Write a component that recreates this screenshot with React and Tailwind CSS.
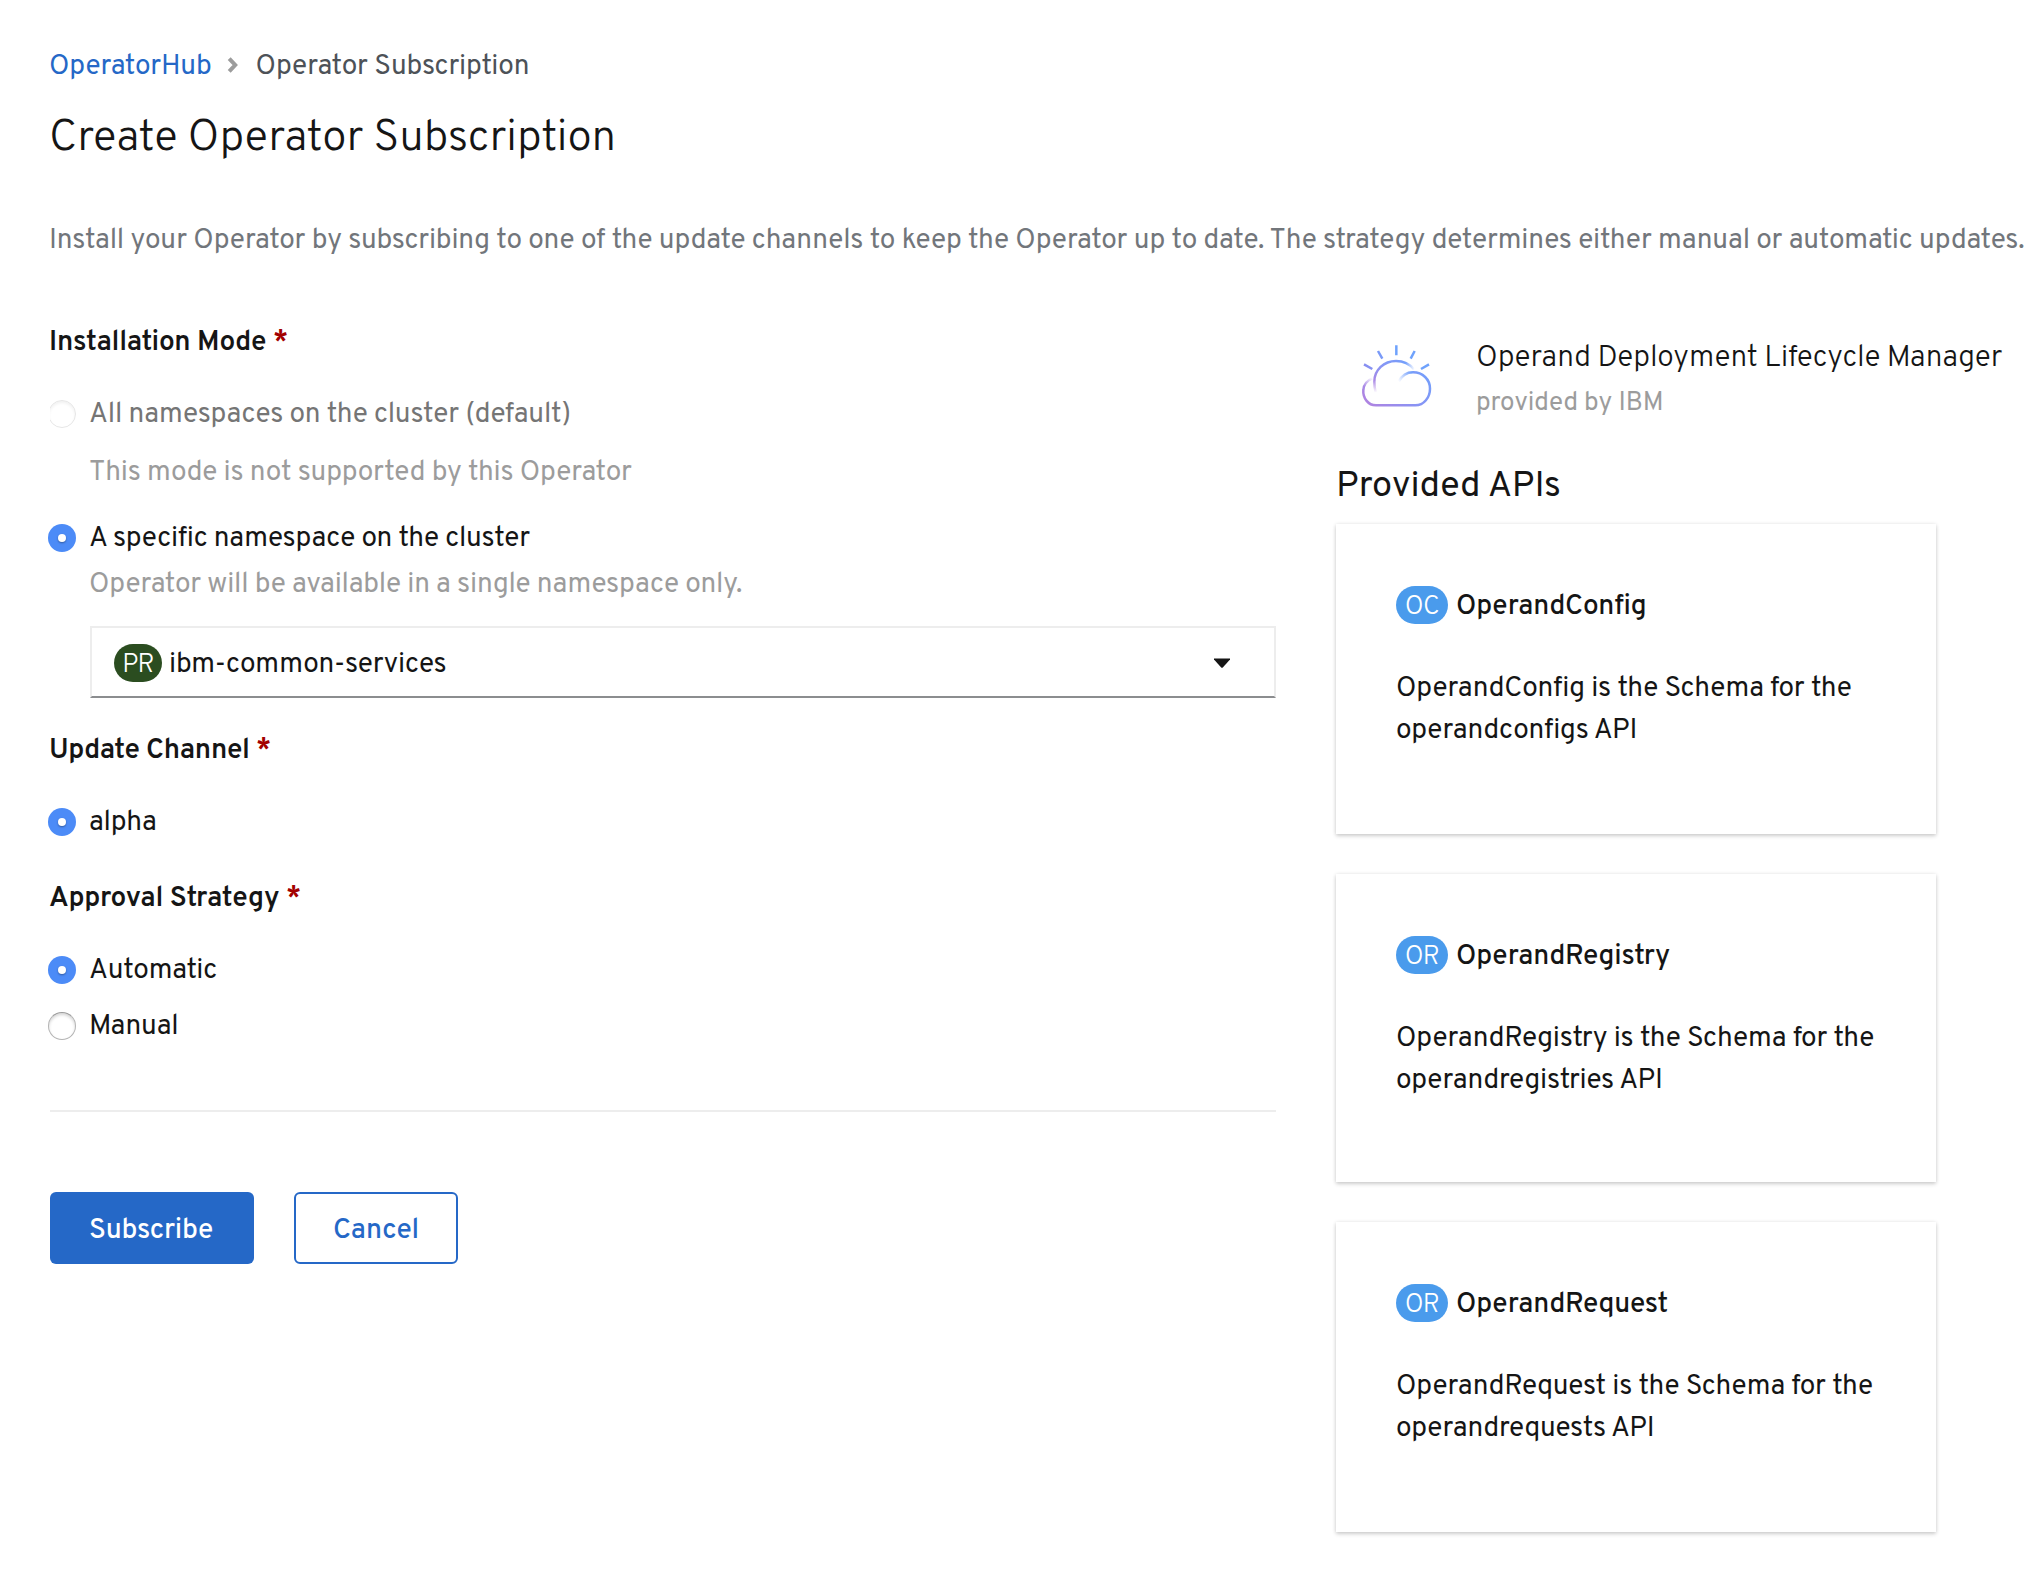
import React from "react";

function Heading({ children, className }) {
  return (
    <h2 className={`-ml-px text-[28px] leading-[42px] font-semibold text-[#151515] ${className}`}>
      {children} <span className="text-[#a30000]">*</span>
    </h2>
  );
}

function Radio({ checked, disabled }) {
  if (checked) {
    return (
      <span className="-ml-0.5 flex size-7 shrink-0 items-center justify-center rounded-full bg-[#4c8bf7]">
        <span className="size-2 rounded-full bg-white shadow-[0_1px_2px_rgba(0,0,0,0.35)]" />
      </span>
    );
  }
  if (disabled) {
    return (
      <span className="flex h-7 w-[26px] shrink-0 justify-end overflow-hidden">
        <span className="size-7 shrink-0 rounded-full border border-[#e6e6e6] shadow-[inset_0_2px_3px_rgba(0,0,0,0.06)]" />
      </span>
    );
  }
  return (
    <span className="-ml-0.5 size-7 shrink-0 rounded-full border border-[#b4b4b4] border-t-[#9a9a9a] bg-white shadow-[inset_0_2px_3px_rgba(0,0,0,0.16)]" />
  );
}

function Option({ label, checked, disabled, className }) {
  return (
    <label className={`flex h-[42px] items-center gap-[13px] ${className}`}>
      <span className="flex pb-0.5">
        <Radio checked={checked} disabled={disabled} />
      </span>
      <span className={disabled ? "text-[#757575]" : "text-[#151515]"}>{label}</span>
    </label>
  );
}

function CloudIcon() {
  return (
    <svg viewBox="0 0 360 270" className="mt-2 ml-1 h-[90px] w-[120px] shrink-0" fill="none" strokeWidth="7.5">
      <defs>
        <linearGradient id="cloud-base" gradientUnits="userSpaceOnUse" x1="80" y1="228" x2="240" y2="100">
          <stop offset="0" stopColor="#b183e0" />
          <stop offset="0.55" stopColor="#8b92f3" />
          <stop offset="1" stopColor="#739ffb" />
        </linearGradient>
        <linearGradient id="cloud-right" gradientUnits="userSpaceOnUse" x1="176" y1="155" x2="214" y2="128">
          <stop offset="0" stopColor="#739ffb" stopOpacity="0" />
          <stop offset="1" stopColor="#739ffb" />
        </linearGradient>
        <linearGradient id="cloud-left" gradientUnits="userSpaceOnUse" x1="96" y1="142" x2="76" y2="172">
          <stop offset="0" stopColor="#a888e6" stopOpacity="0" />
          <stop offset="1" stopColor="#a888e6" />
        </linearGradient>
        <linearGradient id="dome-left" gradientUnits="userSpaceOnUse" x1="0" y1="188" x2="0" y2="93">
          <stop offset="0" stopColor="#b183e0" stopOpacity="0" />
          <stop offset="0.4" stopColor="#a888e6" />
          <stop offset="1" stopColor="#7d9af8" />
        </linearGradient>
        <linearGradient id="dome-right" gradientUnits="userSpaceOnUse" x1="168" y1="0" x2="224" y2="0">
          <stop offset="0" stopColor="#7d9af8" />
          <stop offset="0.5" stopColor="#739ffb" />
          <stop offset="1" stopColor="#739ffb" stopOpacity="0" />
        </linearGradient>
        <linearGradient id="rays" gradientUnits="userSpaceOnUse" x1="72" y1="120" x2="160" y2="60">
          <stop offset="0" stopColor="#8b8df0" />
          <stop offset="1" stopColor="#6fa2fc" />
        </linearGradient>
      </defs>
      <path d="M70 180 C71 166 80 152 97 145" stroke="url(#cloud-left)" />
      <path d="M70 179 C68 204 84 226 108 226 H226 C252 226 270 202 270 176 C270 148 248 127 219 127" stroke="url(#cloud-base)" />
      <path d="M219 127 C199 127 185 138 176 155" stroke="url(#cloud-right)" />
      <path d="M107 188 C103 172 103 164 103 155 C103 120 132 93 168 93" stroke="url(#dome-left)" />
      <path d="M168 93 C190 93 209 102 222 118" stroke="url(#dome-right)" />
      <path d="M169 46 V76 M114 63 L127 86 M224 63 L212 86 M72 103 L97 117 M267 103 L243 117" stroke="url(#rays)" />
    </svg>
  );
}

function ApiCard({ badge, name, lines, className }) {
  return (
    <article
      className={`w-[600px] bg-white px-[60px] pt-[62px] shadow-[0_2px_4px_rgba(3,3,3,0.18),0_0_4px_rgba(3,3,3,0.08)] ${className}`}
    >
      <div className="flex h-[42px] items-start">
        <span className="flex h-[38px] w-[52px] items-start justify-center rounded-[20px] bg-[#4a9bec] text-[26px] leading-[43px] font-light tracking-[-0.6px] text-white">
          {badge}
        </span>
        <h4 className="ml-2 font-medium">{name}</h4>
      </div>
      <p className="mt-10">
        {lines[0]}
        <br />
        {lines[1]}
      </p>
    </article>
  );
}

export default function App() {
  return (
    <main className="h-[1572px] w-[2036px] overflow-hidden bg-white pt-[46px] pl-[49px] font-[Overpass,Roboto,sans-serif] text-[28px] leading-[42px] tracking-[-0.19px] whitespace-nowrap text-[#151515]">
      <nav className="flex items-center">
        <a className="text-[#2568c7]">OperatorHub</a>
        <svg viewBox="0 0 12 16" className="mb-1 ml-[15px] h-4 w-3" fill="none" stroke="#9c9c9c" strokeWidth="4">
          <path d="M2.2 1.6 L8.2 8 L2.2 14.4" />
        </svg>
        <span className="ml-[17px] tracking-[-0.14px] text-[#4d5258]">Operator Subscription</span>
      </nav>
      <h1 className="mt-[18px] text-[44px] leading-[66px] font-light tracking-[-0.1px]">Create Operator Subscription</h1>
      <p className="mt-12 tracking-[-0.175px] text-[#72767b]">
        Install your Operator by subscribing to one of the update channels to keep the Operator up to date. The strategy
        determines either manual or automatic updates.
      </p>

      <div className="mt-[60px] flex items-start gap-[60px] pl-px">
        <form className="w-[1226px]">
          <Heading className="tracking-[-0.22px]">Installation Mode</Heading>
          <Option className="mt-[30px]" label="All namespaces on the cluster (default)" disabled />
          <p className="mt-4 ml-[39px] text-[#9c9c9c]">This mode is not supported by this Operator</p>
          <Option className="mt-6 tracking-[-0.26px]" label="A specific namespace on the cluster" checked />
          <p className="mt-1 ml-[39px] text-[#9c9c9c]">Operator will be available in a single namespace only.</p>
          <div className="mt-5 ml-10 flex h-[72px] items-center border-2 border-[#ededed] border-b-[#8b8d8f] pt-0.5 pr-[44px] pl-[22px]">
            <span className="flex h-[38px] w-12 items-start justify-center rounded-[20px] bg-[#2b4d20] text-[26px] leading-[43px] font-light tracking-[-0.8px] text-white">
              PR
            </span>
            <span className="ml-[7px] grow pt-1">ibm-common-services</span>
            <svg viewBox="0 0 16 10" className="h-2.5 w-4" fill="#151515">
              <path d="M0 0.6 H16 V1.4 L8.8 9.4 Q8 10 7.2 9.4 L0 1.4 Z" />
            </svg>
          </div>
          <Heading className="mt-8 tracking-[-0.4px]">Update Channel</Heading>
          <Option className="mt-[30px]" label="alpha" checked />
          <Heading className="mt-[34px] tracking-[-0.15px]">Approval Strategy</Heading>
          <Option className="mt-[30px]" label="Automatic" checked />
          <Option className="mt-3.5" label="Manual" />
          <hr className="mt-[62px] border-0 border-t-2 border-[#ededed]" />
          <div className="mt-20 flex gap-10">
            <button type="button" className="h-[72px] w-[204px] rounded-md bg-[#2568c7] pt-1.5 pr-0.5 font-medium text-white">
              Subscribe
            </button>
            <button type="button" className="h-[72px] w-[164px] rounded-md border-2 border-[#2568c7] pt-1.5 font-medium text-[#2568c7]">
              Cancel
            </button>
          </div>
        </form>

        <aside className="w-[700px]">
          <div className="flex h-[138px] items-start">
            <CloudIcon />
            <div className="mt-3.5 ml-4">
              <h3 className="text-[30px] leading-[45px] font-light tracking-[-0.22px]">Operand Deployment Lifecycle Manager</h3>
              <p className="mt-[3px] text-[26px] leading-[39px] tracking-normal text-[#9c9c9c]">provided by IBM</p>
            </div>
          </div>
          <h3 className="text-[36px] leading-[54px] tracking-[0.12px]">Provided APIs</h3>
          <div className="mt-2.5 flex flex-col gap-10">
            <ApiCard
              className="h-[310px]"
              badge="OC"
              name="OperandConfig"
              lines={["OperandConfig is the Schema for the", "operandconfigs API"]}
            />
            <ApiCard
              className="h-[308px]"
              badge="OR"
              name="OperandRegistry"
              lines={["OperandRegistry is the Schema for the", "operandregistries API"]}
            />
            <ApiCard
              className="h-[310px]"
              badge="OR"
              name="OperandRequest"
              lines={["OperandRequest is the Schema for the", "operandrequests API"]}
            />
          </div>
        </aside>
      </div>
    </main>
  );
}
